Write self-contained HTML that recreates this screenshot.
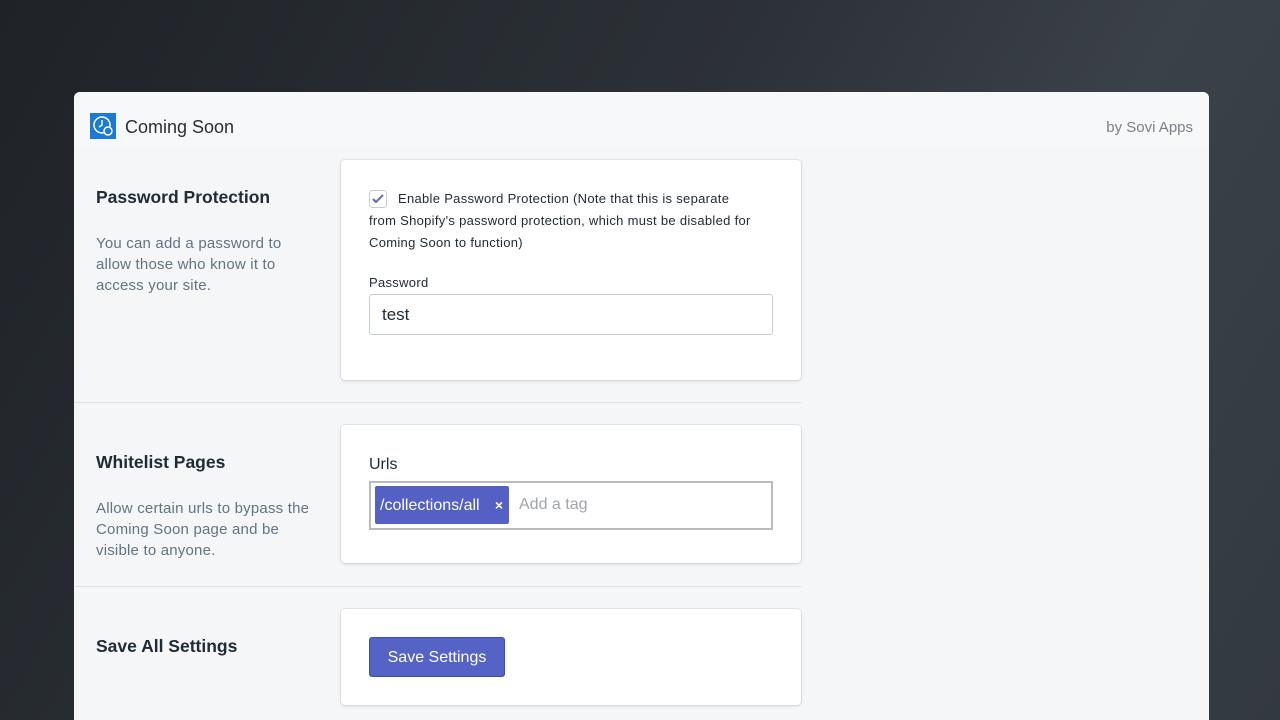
<!DOCTYPE html>
<html><head><style>
*{margin:0;padding:0;box-sizing:border-box}
html,body{width:1280px;height:720px;overflow:hidden}
body{background:linear-gradient(120deg,#1f2328 0%,#2c3137 45%,#3b4149 70%,#333940 100%);font-family:"Liberation Sans",sans-serif;position:relative}
.win{position:absolute;left:74px;top:92px;width:1135px;height:628px;background:#f4f6f8;border-radius:6px 6px 0 0;overflow:hidden}
.hdr{height:56px;background:#f7f8fa;position:relative}
.logo{position:absolute;left:16px;top:21px;width:26px;height:26px;background:#1b7ad6}
.title{position:absolute;left:51px;top:25px;font-size:18px;color:#2a2f35}
.by{position:absolute;right:16px;top:27px;font-size:15px;color:#7a8089}
.h{position:absolute;left:22px;font-size:17.5px;font-weight:bold;color:#212b36}
.d{position:absolute;left:22px;width:205px;font-size:15px;line-height:21px;color:#637381;letter-spacing:.2px}
.card{position:absolute;left:267px;width:460px;background:#fff;border-radius:4px;box-shadow:0 0 0 1px rgba(63,63,68,.08),0 1px 3px rgba(63,63,68,.15)}
.line{position:absolute;left:0;width:727px;height:1px;background:#dfe3e8}
.small{font-size:13px;color:#212b36;line-height:22px;letter-spacing:.3px}
</style></head><body>
<div class="win">
 <div class="hdr">
  <div class="logo"><svg width="26" height="26" viewBox="0 0 26 26"><circle cx="12" cy="12" r="8" fill="none" stroke="#fff" stroke-width="1.5"/><path d="M12 7v5l-3 2" stroke="#fff" stroke-width="1.5" fill="none"/><circle cx="18" cy="18" r="4" fill="#1b7ad6" stroke="#fff" stroke-width="1.5"/></svg></div>
  <div class="title">Coming Soon</div>
  <div class="by">by Sovi Apps</div>
 </div>
 <div class="h" style="top:95px">Password Protection</div>
 <div class="d" style="top:141px">You can add a password to allow those who know it to access your site.</div>
 <div class="card" style="top:68px;height:220px">
  <div style="position:absolute;left:28px;top:30px;width:18px;height:18px;border:1px solid #c4cdd5;border-radius:3px;background:#fff"><svg width="16" height="16" viewBox="0 0 16 16"><path d="M3 8l3 3 7-7" stroke="#5c6ac4" stroke-width="2" fill="none"/></svg></div>
  <div class="small" style="position:absolute;left:28px;top:28px;width:408px;text-indent:29px">Enable Password Protection (Note that this is separate<br>from Shopify's password protection, which must be disabled for Coming Soon to function)</div>
  <div class="small" style="position:absolute;left:28px;top:112px">Password</div>
  <div style="position:absolute;left:28px;top:134px;width:404px;height:41px;border:1px solid #c4cdd5;border-radius:3px;font-size:17px;padding:10px 12px;color:#212b36">test</div>
 </div>
 <div class="line" style="top:310px"></div>
 <div class="h" style="top:360px">Whitelist Pages</div>
 <div class="d" style="top:406px;width:224px">Allow certain urls to bypass the Coming Soon page and be visible to anyone.</div>
 <div class="card" style="top:333px;height:138px">
  <div style="position:absolute;left:28px;top:31px;font-size:16px;color:#212b36">Urls</div>
  <div style="position:absolute;left:28px;top:56px;width:404px;height:49px;border:2px solid #b8bcc0">
   <div style="position:absolute;left:4px;top:3px;width:134px;height:38px;background:#5460c4;border-radius:2px;color:#fff;font-size:16px;padding:11px 5px">/collections/all <span style="position:absolute;right:6px;top:11px;font-weight:bold;font-size:14px">×</span></div>
   <div style="position:absolute;left:148px;top:13px;font-size:16px;color:#a0a5aa">Add a tag</div>
  </div>
 </div>
 <div class="line" style="top:494px"></div>
 <div class="h" style="top:544px">Save All Settings</div>
 <div class="card" style="top:517px;height:96px">
  <div style="position:absolute;left:28px;top:28px;width:136px;height:40px;background:#5563c6;border:1px solid #3f4eae;border-radius:3px;color:#fff;font-size:16px;text-align:center;line-height:40px">Save Settings</div>
 </div>
</div>
</body></html>
